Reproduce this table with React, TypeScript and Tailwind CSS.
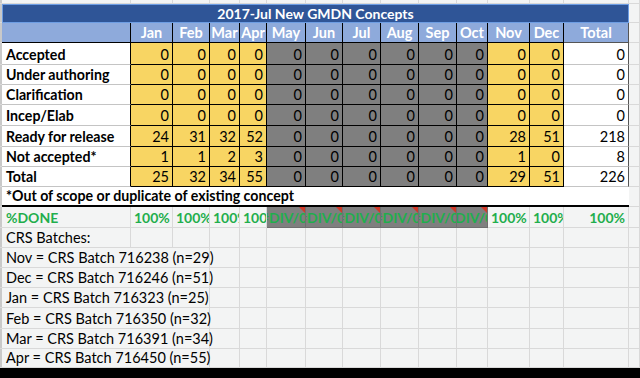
const GRID =
  "grid grid-cols-[2px_129px_42px_37px_30px_27px_39px_37px_38px_38px_38px_31px_42px_34px_65px_11px]";

const FONT = "font-['Lato','Liberation_Sans',sans-serif]";

const MONTHS = ["Jan", "Feb", "Mar", "Apr", "May", "Jun", "Jul", "Aug", "Sep", "Oct", "Nov", "Dec"];
const COLORS = [
  "bg-[#f8d563]", "bg-[#f8d563]", "bg-[#f8d563]", "bg-[#f8d563]",
  "bg-[#7f7f7f]", "bg-[#7f7f7f]", "bg-[#7f7f7f]", "bg-[#7f7f7f]", "bg-[#7f7f7f]", "bg-[#7f7f7f]",
  "bg-[#f8d563]", "bg-[#f8d563]",
];

const zeros = [0, 0, 0, 0, 0, 0, 0, 0, 0, 0, 0, 0];

const rows = [
  { label: "Accepted", values: zeros, total: 0, h: "h-[22px]" },
  { label: "Under authoring", values: zeros, total: 0, h: "h-[20px]" },
  { label: "Clarification", values: zeros, total: 0, h: "h-[20px]" },
  { label: "Incep/Elab", values: zeros, total: 0, h: "h-[21px]" },
  { label: "Ready for release", values: [24, 31, 32, 52, 0, 0, 0, 0, 0, 0, 28, 51], total: 218, h: "h-[21px]" },
  { label: "Not accepted*", values: [1, 1, 2, 3, 0, 0, 0, 0, 0, 0, 1, 0], total: 8, h: "h-[20px]" },
  { label: "Total", values: [25, 32, 34, 55, 0, 0, 0, 0, 0, 0, 29, 51], total: 226, h: "h-[20px]" },
];

const batches = [
  { text: "Nov = CRS Batch 716238 (n=29)", h: "h-[20px]" },
  { text: "Dec = CRS Batch 716246 (n=51)", h: "h-[20px]" },
  { text: "Jan = CRS Batch 716323 (n=25)", h: "h-[20px]" },
  { text: "Feb = CRS Batch 716350 (n=32)", h: "h-[21px]" },
  { text: "Mar = CRS Batch 716391 (n=34)", h: "h-[20px]" },
  { text: "Apr = CRS Batch 716450 (n=55)", h: "h-[19px]" },
];

function Grid({ n }: { n: number }) {
  return (
    <>
      {Array.from({ length: n }).map((_, i) => (
        <div key={i} className="border-r border-b border-[#d9d9d9]" />
      ))}
    </>
  );
}

function Gutter() {
  return <div className="border-b border-[#d9d9d9] bg-[#c9c9c9]" />;
}

export default function App() {
  return (
    <div className={`h-[378px] w-[640px] overflow-hidden bg-[#f3f4f4] text-[14px] text-black ${FONT}`}>
      {/* sheet row above the table */}
      <div className={`${GRID} h-[4px]`}>
        <Gutter />
        <Grid n={15} />
      </div>

      {/* title */}
      <div className={`${GRID} h-[19px]`}>
        <Gutter />
        <div className="col-span-14 flex items-center justify-center border border-[#6d9de3] bg-[#2f5597] text-[14px] font-bold leading-none text-white">
          2017-Jul New GMDN Concepts
        </div>
        <Grid n={1} />
      </div>

      {/* month header */}
      <div className={`${GRID} h-[20px]`}>
        <Gutter />
        <div className="border-r border-b border-black bg-[#8eaadb]" />
        {MONTHS.map((m) => (
          <div
            key={m}
            className="flex items-end justify-center overflow-hidden border-r border-b border-black bg-[#8eaadb] text-[14.5px] font-bold leading-[18px] text-white"
          >
            {m}
          </div>
        ))}
        <div className="flex items-end justify-center border-r border-b border-[#555] bg-[#8eaadb] text-[14.5px] font-bold leading-[18px] text-white">
          Total
        </div>
        <Grid n={1} />
      </div>

      {/* data rows */}
      {rows.map((r) => (
        <div key={r.label} className={`${GRID} ${r.h} text-[14.5px]`}>
          <Gutter />
          <div className="flex items-end border-r border-b border-r-black border-b-[#c4c4c4] bg-white pl-[4px] text-[14.2px] font-bold leading-[18px] whitespace-nowrap">
            {r.label}
          </div>
          {r.values.map((v, i) => (
            <div
              key={i}
              className={`flex items-end justify-end border-r border-b border-black pr-[3px] leading-[18px] ${COLORS[i]}`}
            >
              {v}
            </div>
          ))}
          <div className="flex items-end justify-end border-r border-b border-r-[#555] border-b-[#c4c4c4] bg-white pr-[3px] leading-[18px]">
            {r.total}
          </div>
          <Grid n={1} />
        </div>
      ))}

      {/* footnote */}
      <div className={`${GRID} h-[20px]`}>
        <Gutter />
        <div className="col-span-14 flex items-end border-b-2 border-black bg-white pl-[4px] text-[14.2px] font-bold leading-[18px]">
          *Out of scope or duplicate of existing concept
        </div>
        <Grid n={1} />
      </div>

      {/* %DONE */}
      <div className={`${GRID} h-[21px] font-bold text-[#1fae4d]`}>
        <Gutter />
        <div className="flex items-end border-r border-b border-[#d9d9d9] pl-[4px] leading-[19px]">%DONE</div>
        {MONTHS.map((m, i) =>
          COLORS[i] === "bg-[#7f7f7f]" ? (
            <div
              key={m}
              className="relative flex items-end justify-center overflow-hidden border-r border-b border-[#6f6f6f] bg-[#7f7f7f] leading-[19px] whitespace-nowrap"
            >
              #DIV/0!
              <span className="absolute top-0 right-0 h-0 w-0 border-t-[6px] border-l-[6px] border-t-[#d23b2a] border-l-transparent" />
            </div>
          ) : (
            <div
              key={m}
              className="overflow-hidden border-r border-b border-[#d9d9d9] px-[3px] pt-[1px] text-right leading-[19px] whitespace-nowrap"
            >
              100%
            </div>
          ),
        )}
        <div className="border-r border-b border-[#d9d9d9] pr-[3px] pt-[1px] text-right leading-[19px]">100%</div>
        <Grid n={1} />
      </div>

      {/* CRS batches header */}
      <div className={`${GRID} h-[20px] text-[14.5px]`}>
        <Gutter />
        <div className="flex items-end border-r border-b border-[#d9d9d9] pl-[4px] leading-[18px] whitespace-nowrap">
          CRS Batches:
        </div>
        <Grid n={14} />
      </div>

      {batches.map((b) => (
        <div key={b.text} className={`${GRID} ${b.h} text-[14.5px]`}>
          <Gutter />
          <div className="col-span-3 flex items-end border-r border-b border-[#d9d9d9] pl-[4px] leading-[18px] whitespace-nowrap">
            {b.text}
          </div>
          <Grid n={12} />
        </div>
      ))}

      <div className="h-[10px] bg-black" />
    </div>
  );
}
